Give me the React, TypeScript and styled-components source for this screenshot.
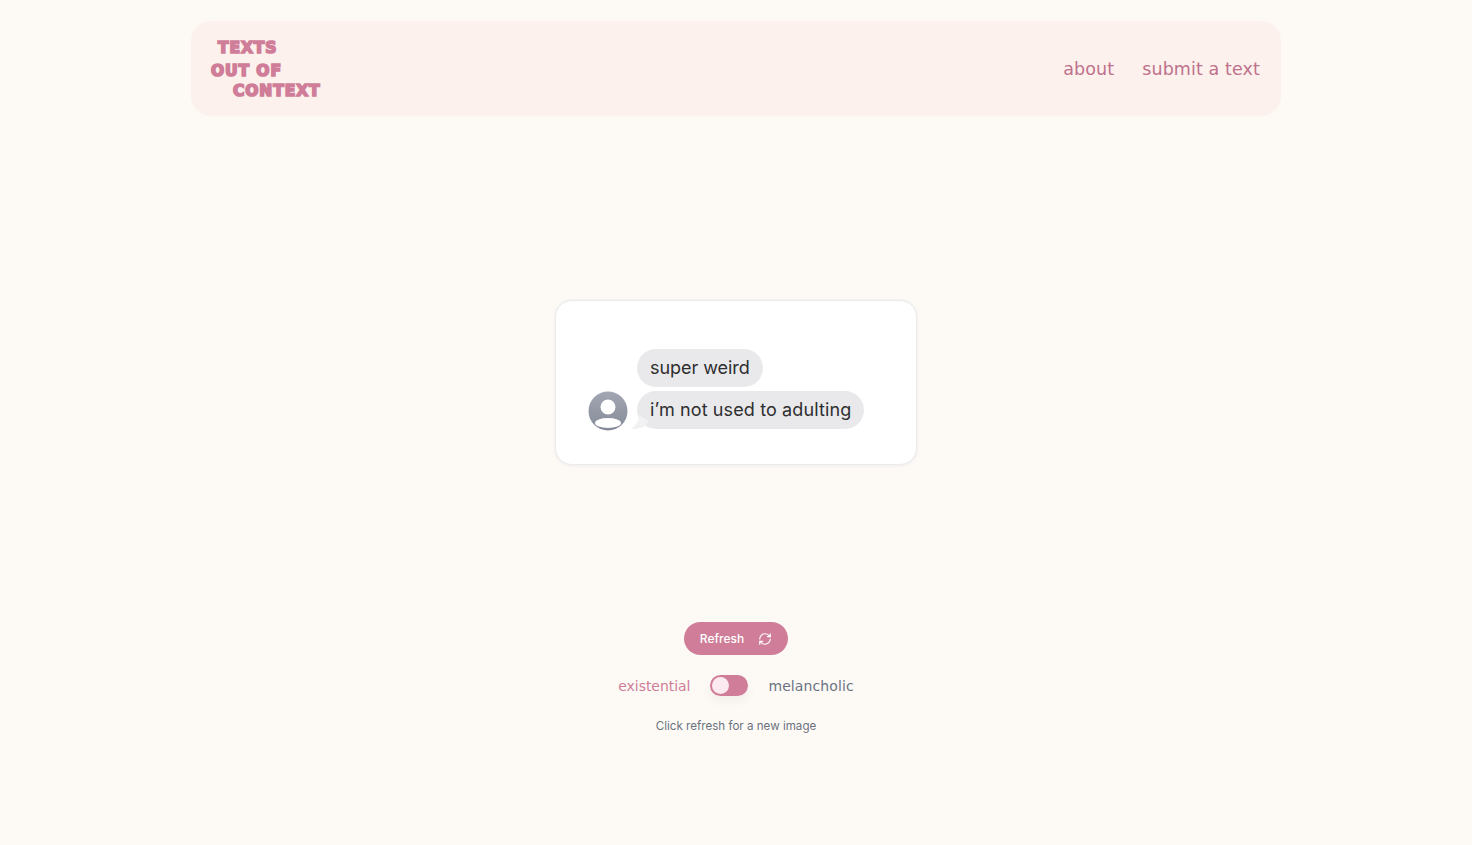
import React from "react";
import styled, { createGlobalStyle } from "styled-components";

const Global = createGlobalStyle`
  html, body { margin: 0; padding: 0; background: #fdfaf6; }
  body { font-family: "Inter", "Liberation Sans", sans-serif; }
`;

const Page = styled.div`
  width: 1472px;
  height: 845px;
  overflow: hidden;
  padding-top: 21px;
  box-sizing: border-box;
  display: flex;
  flex-direction: column;
  align-items: center;
`;

const Header = styled.header`
  width: 1090px;
  height: 95px;
  box-sizing: border-box;
  padding: 0 21px 0 20px;
  background: #fcf1ec;
  border-radius: 20px;
  display: flex;
  align-items: center;
  justify-content: space-between;
`;

const Logo = styled.div`
  display: flex;
  flex-direction: column;
  font-family: "DejaVu Sans", sans-serif;
  font-weight: 700;
  font-size: 15.5px;
  color: #cf7d98;
  -webkit-text-stroke: 1.7px #cf7d98;
`;

const LogoLine = styled.span<{ $indent: number; $height: number; $spacing: number }>`
  display: block;
  margin-left: ${(p) => p.$indent}px;
  height: ${(p) => p.$height}px;
  line-height: ${(p) => p.$height}px;
  letter-spacing: ${(p) => p.$spacing}px;
  white-space: nowrap;
`;

const Nav = styled.nav`
  display: flex;
  gap: 28px;
`;

const NavLink = styled.a`
  font-family: "DejaVu Sans", sans-serif;
  font-size: 17.5px;
  letter-spacing: 0.1px;
  color: #bf718d;
  text-decoration: none;
`;

const Card = styled.section`
  margin-top: 184px;
  width: 362px;
  height: 165px;
  box-sizing: border-box;
  background: #ffffff;
  border: 1px solid #ecebeb;
  border-radius: 17px;
  box-shadow: 0 0 0 1px #f5f3f1, 0 1px 3px rgba(60, 60, 70, 0.08);
  padding: 48px 0 0 32px;
  display: flex;
  align-items: flex-start;
`;

const Conversation = styled.div`
  display: flex;
  align-items: flex-end;
  gap: 9px;
`;

const Avatar = styled.svg`
  width: 40px;
  height: 40px;
  display: block;
  flex: none;
  margin-bottom: -2px;
`;

const Bubbles = styled.div`
  display: flex;
  flex-direction: column;
  align-items: flex-start;
  gap: 4px;
`;

const Bubble = styled.div<{ $tracking: number }>`
  height: 38px;
  line-height: 37px;
  padding: 0 13px;
  background: #e9e9eb;
  border-radius: 19px;
  font-size: 18px;
  letter-spacing: ${(p) => p.$tracking}px;
  color: #2e2e30;
  white-space: nowrap;
  position: relative;
`;

const Tail = styled.svg`
  position: absolute;
  left: -6px;
  bottom: 0;
  width: 20px;
  height: 14px;
`;

const BubbleText = styled.span`
  position: relative;
`;

const Controls = styled.div`
  margin-top: 157px;
  display: flex;
  flex-direction: column;
  align-items: center;
`;

const RefreshButton = styled.button`
  width: 104px;
  height: 33px;
  border: 0;
  border-radius: 17px;
  background: #cf7d98;
  color: #fff;
  font-family: "Inter", sans-serif;
  font-size: 12px;
  font-weight: 500;
  display: flex;
  align-items: center;
  justify-content: center;
  gap: 14px;
  padding: 0;
`;

const Mood = styled.div`
  margin-top: 20px;
  display: flex;
  align-items: center;
  gap: 20px;
  height: 21px;
`;

const MoodLabel = styled.span<{ $active?: boolean }>`
  font-family: "DejaVu Sans", sans-serif;
  font-size: 14px;
  font-weight: 400;
  letter-spacing: ${(p) => (p.$active ? "-0.05px" : "0.1px")};
  color: ${(p) => (p.$active ? "#cf7d98" : "#6b7280")};
`;

const Toggle = styled.div`
  width: 38px;
  height: 21px;
  box-sizing: border-box;
  border-radius: 11px;
  background: #cf7d98;
  padding: 2px;
  box-shadow: 0 6px 10px rgba(120, 90, 90, 0.07);
`;

const Knob = styled.div`
  width: 17px;
  height: 17px;
  border-radius: 50%;
  background: #fdeaf0;
`;

const Hint = styled.p`
  margin: 20px 0 0;
  font-size: 11.6px;
  line-height: 20px;
  color: #6b7280;
`;

export default function App() {
  return (
    <Page>
      <Global />
      <Header>
        <Logo>
          <LogoLine $indent={7} $height={23} $spacing={0.9}>TEXTS</LogoLine>
          <LogoLine $indent={0} $height={23} $spacing={0.9}>OUT OF</LogoLine>
          <LogoLine $indent={22} $height={17} $spacing={0.9}>CONTEXT</LogoLine>
        </Logo>
        <Nav>
          <NavLink>about</NavLink>
          <NavLink>submit a text</NavLink>
        </Nav>
      </Header>
      <Card>
        <Conversation>
          <Avatar viewBox="0 0 40 40">
            <defs>
              <linearGradient id="av" x1="0" y1="0" x2="0" y2="1">
                <stop offset="0" stopColor="#a3a7b3" />
                <stop offset="1" stopColor="#858a98" />
              </linearGradient>
            </defs>
            <circle cx="20" cy="20" r="19.5" fill="url(#av)" />
            <circle cx="20" cy="16" r="7.5" fill="#fff" />
            <ellipse cx="20" cy="32" rx="13" ry="5" fill="#fff" />
          </Avatar>
          <Bubbles>
            <Bubble $tracking={-0.05}>super weird</Bubble>
            <Bubble $tracking={0.12}>
              <Tail viewBox="0 0 20 14">
                <path d="M8 0 C8 6 5 11 0 13.5 C5 14 10 13.5 14 11 L18 6 Z" fill="#f1f1f3" />
              </Tail>
              <BubbleText>i’m not used to adulting</BubbleText>
            </Bubble>
          </Bubbles>
        </Conversation>
      </Card>
      <Controls>
        <RefreshButton>
          Refresh
          <svg width="14" height="14" viewBox="0 0 24 24" fill="none" stroke="#fff" strokeWidth="2" strokeLinecap="round" strokeLinejoin="round">
            <path d="M3 12a9 9 0 0 1 9-9 9.75 9.75 0 0 1 6.74 2.74L21 8" />
            <path d="M21 3v5h-5" />
            <path d="M21 12a9 9 0 0 1-9 9 9.75 9.75 0 0 1-6.74-2.74L3 16" />
            <path d="M8 16H3v5" />
          </svg>
        </RefreshButton>
        <Mood>
          <MoodLabel $active>existential</MoodLabel>
          <Toggle><Knob /></Toggle>
          <MoodLabel>melancholic</MoodLabel>
        </Mood>
        <Hint>Click refresh for a new image</Hint>
      </Controls>
    </Page>
  );
}
